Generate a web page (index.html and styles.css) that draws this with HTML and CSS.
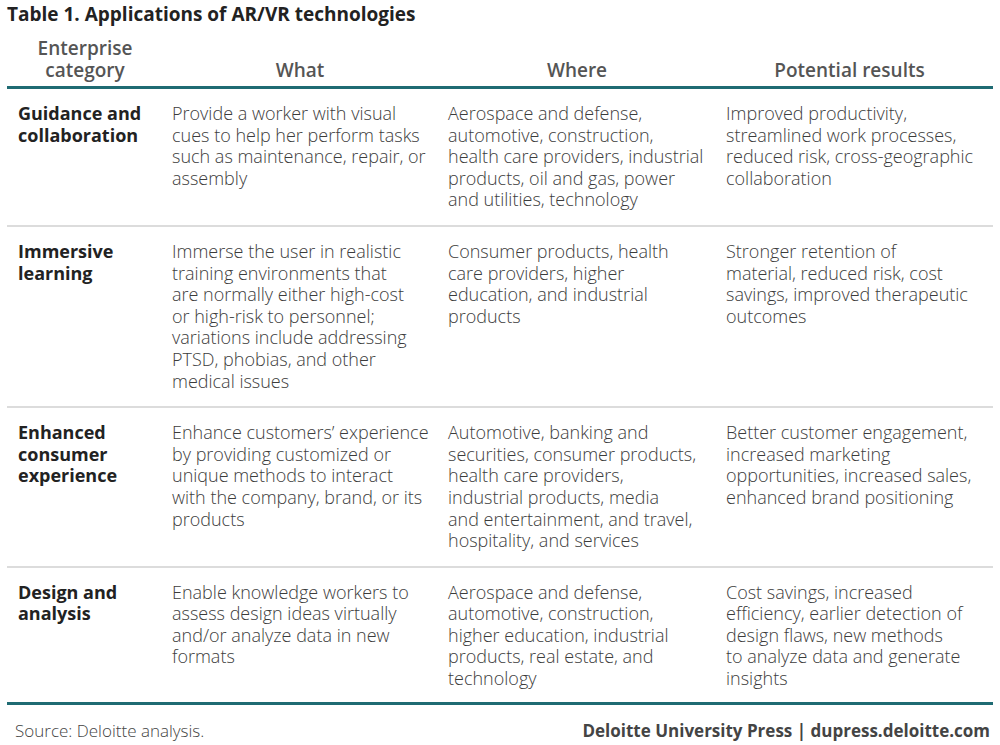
FILE: index.html
```html
<!DOCTYPE html>
<html lang="en">
<head>
<meta charset="utf-8">
<title>Table 1. Applications of AR/VR technologies</title>
<link rel="stylesheet" href="styles.css">
</head>
<body>
<div class="page">
  <h1 class="title">Table 1. Applications of AR/VR technologies</h1>
  <div class="table">
    <div class="row head">
      <div class="cell">Enterprise<br>category</div>
      <div class="cell">What</div>
      <div class="cell">Where</div>
      <div class="cell">Potential results</div>
    </div>
    <div class="row">
      <div class="cell cat">Guidance and<br>collaboration</div>
      <div class="cell">Provide a worker with visual<br>cues to help her perform tasks<br>such as maintenance, repair, or<br>assembly</div>
      <div class="cell">Aerospace and defense,<br>automotive, construction,<br>health care providers, industrial<br>products, oil and gas, power<br>and utilities, technology</div>
      <div class="cell">Improved productivity,<br>streamlined work processes,<br>reduced risk, cross-geographic<br>collaboration</div>
    </div>
    <div class="row">
      <div class="cell cat">Immersive<br>learning</div>
      <div class="cell">Immerse the user in realistic<br>training environments that<br>are normally either high-cost<br>or high-risk to personnel;<br>variations include addressing<br>PTSD, phobias, and other<br>medical issues</div>
      <div class="cell">Consumer products, health<br>care providers, higher<br>education, and industrial<br>products</div>
      <div class="cell">Stronger retention of<br>material, reduced risk, cost<br>savings, improved therapeutic<br>outcomes</div>
    </div>
    <div class="row">
      <div class="cell cat">Enhanced<br>consumer<br>experience</div>
      <div class="cell">Enhance customers’ experience<br>by providing customized or<br>unique methods to interact<br>with the company, brand, or its<br>products</div>
      <div class="cell">Automotive, banking and<br>securities, consumer products,<br>health care providers,<br>industrial products, media<br>and entertainment, and travel,<br>hospitality, and services</div>
      <div class="cell">Better customer engagement,<br>increased marketing<br>opportunities, increased sales,<br>enhanced brand positioning</div>
    </div>
    <div class="row last">
      <div class="cell cat">Design and<br>analysis</div>
      <div class="cell">Enable knowledge workers to<br>assess design ideas virtually<br>and/or analyze data in new<br>formats</div>
      <div class="cell">Aerospace and defense,<br>automotive, construction,<br>higher education, industrial<br>products, real estate, and<br>technology</div>
      <div class="cell">Cost savings, increased<br>efficiency, earlier detection of<br>design flaws, new methods<br>to analyze data and generate<br>insights</div>
    </div>
  </div>
  <div class="footer">
    <span class="source">Source: Deloitte analysis.</span>
    <span class="press">Deloitte University Press | dupress.deloitte.com</span>
  </div>
</div>
</body>
</html>
```
FILE: styles.css
```css
html, body {
  margin: 0;
  padding: 0;
  background: #ffffff;
}
body {
  font-family: "Open Sans", "Liberation Sans", sans-serif;
  color: #3a3a3a;
}
.page {
  width: 1000px;
  height: 745px;
  padding: 0 7px;
  box-sizing: border-box;
}
.title {
  margin: 0;
  padding-top: 2px;
  font-size: 19px;
  font-weight: 700;
  line-height: 25px;
  color: #222;
}
.table {
  margin-top: 10px;
}
.row {
  display: grid;
  grid-template-columns: 165px 276px 278px 1fr;
  border-bottom: 2px solid #dcdcdc;
  padding: 14px 0 14px;
}
.row.head {
  border-bottom: 3px solid #1f6b73;
  padding: 0 0 5px;
  align-items: end;
}
.row.last {
  border-bottom: 3px solid #1f6b73;
  padding-bottom: 12px;
}
.cell {
  font-size: 18px;
  font-weight: 300;
  line-height: 21.6px;
  color: #3c3c3c;
  padding-right: 4px;
  white-space: nowrap;
}
.cell:first-child {
  padding-left: 11px;
}
.head .cell {
  text-align: center;
  font-weight: 600;
  font-size: 19px;
  color: #555;
  line-height: 22px;
  padding-right: 20px;
}
.cell.cat {
  font-weight: 700;
  color: #222;
}
.footer {
  display: flex;
  justify-content: space-between;
  align-items: baseline;
  padding: 15px 3px 0 8px;
  font-size: 17px;
  line-height: 22px;
}
.source {
  font-weight: 300;
  color: #444;
}
.press {
  font-weight: 700;
  color: #444;
}
```
